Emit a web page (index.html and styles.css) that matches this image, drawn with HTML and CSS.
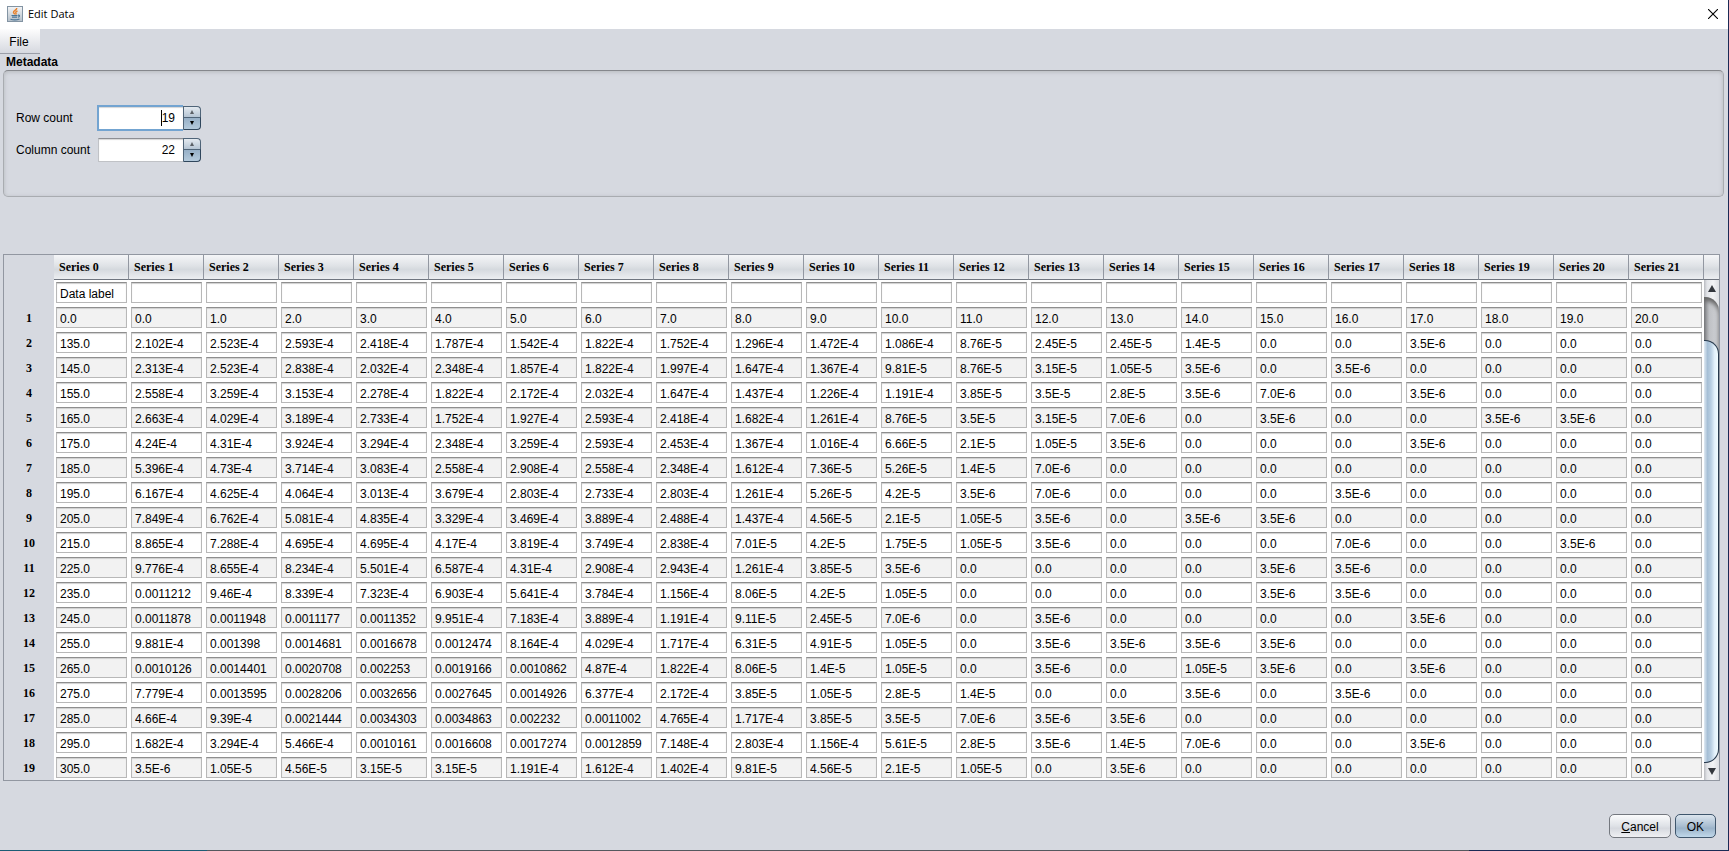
FILE: index.html
```html
<!DOCTYPE html>
<html lang="en">
<head>
<meta charset="utf-8">
<title>Edit Data</title>
<link rel="stylesheet" href="styles.css">
</head>
<body>
<div class="window">
  <header class="titlebar">
    <svg class="app-icon" viewBox="0 0 16 16" aria-hidden="true">
      <defs><linearGradient id="ig" x1="0" y1="0" x2="0" y2="1"><stop offset="0" stop-color="#f4f5f6"/><stop offset="1" stop-color="#b4bfc9"/></linearGradient></defs>
      <rect x=".5" y=".5" width="15" height="15" fill="url(#ig)" stroke="#8394a3"/>
      <path d="M9.8 2C10 4 6.300 4.600 6.500 6.300C6.600 7.200 7.800 7.600 7.600 8.500M10.500 5C9 5.500 8.300 6.300 9 7.200C9.300 7.800 9 8.200 8.600 8.600" fill="none" stroke="#e8822c" stroke-width="1.400"/>
      <path d="M4.500 9.500H10.500M5 11.200H10M3.500 13.200C6 14 10 14 12.500 13M11 9.300C13 8.800 13 10.800 10.800 11.200" fill="none" stroke="#4a7596" stroke-width="1.200"/>
    </svg>
    <h1 class="title">Edit Data</h1>
    <button class="close" type="button" aria-label="Close">
      <svg viewBox="0 0 10 10" aria-hidden="true"><path d="M0 0L10 10M10 0L0 10" stroke="#000" stroke-width="1.100"/></svg>
    </button>
  </header>
  <nav class="menubar"><button class="menu" type="button">File</button></nav>
  <main class="content">
    <section class="metadata">
      <h2 class="group-title">Metadata</h2>
      <div class="group">
        <label class="label" for="rows">Row count</label>
        <div class="spinner focused">
          <div class="field"><input id="rows" type="text" value="19"><span class="caret"></span></div>
          <div class="steps">
            <button class="step up" type="button" aria-label="Increase row count"></button>
            <button class="step down" type="button" aria-label="Decrease row count"></button>
          </div>
        </div>
        <label class="label" for="cols">Column count</label>
        <div class="spinner">
          <div class="field"><input id="cols" type="text" value="22"></div>
          <div class="steps">
            <button class="step up" type="button" aria-label="Increase column count"></button>
            <button class="step down" type="button" aria-label="Decrease column count"></button>
          </div>
        </div>
      </div>
    </section>
    <section class="grid-pane">
      <table class="grid">
        <thead><tr id="head"></tr></thead>
        <tbody id="body"></tbody>
      </table>
      <div class="scroll">
        <div class="scroll-head"></div>
        <button class="arrow arrow-up" type="button" aria-label="Scroll up"></button>
        <div class="track"><div class="thumb"></div></div>
        <button class="arrow arrow-down" type="button" aria-label="Scroll down"></button>
      </div>
    </section>
    <footer class="actions">
      <button class="button" type="button"><u>C</u>ancel</button>
      <button class="button default" type="button">OK</button>
    </footer>
  </main>
  <div class="desktop-edge"></div>
</div>
<script src="grid.js"></script>
</body>
</html>
```
FILE: styles.css
```css
* { box-sizing: border-box; }

body {
  margin: 0;
  background: #d6d9e0;
  color: #000;
  font: 12px/16px "Liberation Sans", Arial, sans-serif;
}

button, input { font: inherit; color: inherit; margin: 0; padding: 0; border: 0; }

.window {
  display: flex;
  flex-direction: column;
  min-height: 100vh;
  border-right: 1px solid #1b2a55;
}
.desktop-edge {
  height: 1px;
  background: linear-gradient(90deg, #1d5c75 12%, #55585e 12%, #55585e 85%, #1b2a55 85%);
}

.titlebar {
  display: flex;
  align-items: center;
  gap: 5px;
  height: 29px;
  padding: 0 10px 2px 7px;
  background: #fff;
}
.app-icon { width: 16px; height: 16px; }
.title { flex: 1; margin: 0; font: 11px/16px "Open Sans", "Noto Sans", sans-serif; }
.close { display: flex; background: none; }
.close svg { width: 10px; height: 10px; }

.menubar { display: flex; height: 25px; }
.menu {
  width: 40px;
  padding: 2px 2px 0 0;
  background: linear-gradient(#fdfdfd, #d6d9e0);
  border-bottom: 1px solid #9a9ea8;
}

.content { display: flex; flex-direction: column; flex: 1; padding: 0 4px 0 3px; }

.metadata { padding-bottom: 57px; }
.group-title { margin: 0; padding: 1px 0 0 3px; font-size: 12px; line-height: 15px; }
.group {
  display: grid;
  grid-template-columns: max-content max-content;
  align-content: center;
  align-items: center;
  gap: 6px 7px;
  min-height: 127px;
  padding: 0 12px;
  border: 1px solid #a9acb1;
  border-top-color: #85878c;
  border-radius: 5px;
  box-shadow: inset 0 1px 4px #b5b8bc;
}

.spinner { display: flex; width: 104px; height: 26px; }
.field { position: relative; flex: 1; display: flex; padding: 1px 0 1px 1px; }
.field input {
  flex: 1;
  width: 0;
  padding-right: 8px;
  text-align: right;
  background: #fff;
  border: 1px solid #c0c2c6;
  border-top-color: #8d8f94;
  border-right: 0;
  box-shadow: inset 0 1px 1px #d6d6d6;
}
.focused .field { padding: 0; }
.focused .field input { border: 2px solid #73a4d1; border-right: 0; caret-color: transparent; outline: none; }
.caret { position: absolute; top: 5px; right: 21px; width: 1px; height: 16px; background: #000; }
.steps { display: flex; flex-direction: column; width: 18px; padding: 1px 0; }
.step {
  display: flex;
  flex: 1;
  align-items: center;
  justify-content: center;
  border: 1px solid #4f6478;
}
.step::before { content: ""; border: 2px solid transparent; }
.up { border-radius: 0 4px 0 0; border-bottom: 0; background: linear-gradient(#e4eaf0, #b5c5d4); }
.up::before { border-top: 0; border-bottom: 4px solid #5b6066; }
.down { border-radius: 0 0 4px 0; border-color: #4f6478 #2f465c #2f465c #4f6478; background: linear-gradient(#97b0c7, #b4cadc); }
.down::before { border-bottom: 0; border-top: 4px solid #000; }

.grid-pane {
  display: flex;
  margin-right: 4px;
  border: 1px solid #9297a1;
}
.grid {
  flex: 1;
  table-layout: fixed;
  border-collapse: separate;
  border-spacing: 0;
}
.grid th { font: bold 12px/16px "Liberation Serif", "Times New Roman", serif; }
.corner { width: 50px; }
.series {
  height: 25px;
  padding: 0 5px;
  text-align: left;
  background: linear-gradient(#f5f6f8, #dfe2e6 45%, #d5d9de 60%, #eceef1);
  border-right: 1px solid #9297a1;
  border-bottom: 1px solid #6f757f;
}
.cell { height: 25px; padding: 2px; background: #fff; }
.cell input {
  display: block;
  width: 100%;
  height: 21px;
  padding: 3px 3px 0;
  background: #fff;
  border: 1px solid #b8b8b8;
  border-top-color: #8e8e8e;
  box-shadow: inset 0 1px 1px #cfcfcf;
}
.shaded input { background: #f2f2f2; }

.scroll {
  display: flex;
  flex-direction: column;
  width: 15px;
  background: linear-gradient(90deg, #b9bbc0, #e2e4e8 20%, #f2f3f5 60%, #dcdee2);
}
.scroll-head {
  height: 25px;
  background: linear-gradient(#f5f6f8, #dfe2e6 45%, #d5d9de 60%, #eceef1);
  border-bottom: 1px solid #6f757f;
}
.arrow { display: flex; align-items: center; justify-content: center; height: 17px; background: none; }
.arrow::before { content: ""; border: 4px solid transparent; }
.arrow-up::before { border-top: 0; border-bottom: 7px solid #33373d; }
.arrow-down::before { border-bottom: 0; border-top: 7px solid #33373d; }
.track {
  flex: 1;
  display: flex;
  padding-top: 43px;
  border-radius: 0 14px 14px 0;
  background: linear-gradient(90deg, #85878c, #bfc1c5 35%, #d2d4d8);
  box-shadow: inset 0 4px 4px #666;
}
.thumb {
  flex: 1;
  border: 1px solid #26394d;
  border-left: 0;
  border-radius: 0 14px 14px 0;
  background: linear-gradient(90deg, #dfe9f2, #a6bfd6 25%, #b9cfe2 50%, #e2f0fa 75%, #f2fdff);
}

.actions { display: flex; justify-content: flex-end; gap: 4px; padding: 33px 8px 12px; }
.button {
  height: 24px;
  padding: 1px 11px 0;
  border: 1px solid #74787f;
  border-radius: 5px;
  background: linear-gradient(#fafbfc, #dfe2e7 50%, #d6d9df 60%, #eff0f3);
}
.default { border-color: #3f566c; background: linear-gradient(#dce5ee, #a9bed1 50%, #9bb3c9 60%, #c0d8ea); }
```
FILE: grid.js
```js
const rows = [
  "0.0 0.0 1.0 2.0 3.0 4.0 5.0 6.0 7.0 8.0 9.0 10.0 11.0 12.0 13.0 14.0 15.0 16.0 17.0 18.0 19.0 20.0",
  "135.0 2.102E-4 2.523E-4 2.593E-4 2.418E-4 1.787E-4 1.542E-4 1.822E-4 1.752E-4 1.296E-4 1.472E-4 1.086E-4 8.76E-5 2.45E-5 2.45E-5 1.4E-5 0.0 0.0 3.5E-6 0.0 0.0 0.0",
  "145.0 2.313E-4 2.523E-4 2.838E-4 2.032E-4 2.348E-4 1.857E-4 1.822E-4 1.997E-4 1.647E-4 1.367E-4 9.81E-5 8.76E-5 3.15E-5 1.05E-5 3.5E-6 0.0 3.5E-6 0.0 0.0 0.0 0.0",
  "155.0 2.558E-4 3.259E-4 3.153E-4 2.278E-4 1.822E-4 2.172E-4 2.032E-4 1.647E-4 1.437E-4 1.226E-4 1.191E-4 3.85E-5 3.5E-5 2.8E-5 3.5E-6 7.0E-6 0.0 3.5E-6 0.0 0.0 0.0",
  "165.0 2.663E-4 4.029E-4 3.189E-4 2.733E-4 1.752E-4 1.927E-4 2.593E-4 2.418E-4 1.682E-4 1.261E-4 8.76E-5 3.5E-5 3.15E-5 7.0E-6 0.0 3.5E-6 0.0 0.0 3.5E-6 3.5E-6 0.0",
  "175.0 4.24E-4 4.31E-4 3.924E-4 3.294E-4 2.348E-4 3.259E-4 2.593E-4 2.453E-4 1.367E-4 1.016E-4 6.66E-5 2.1E-5 1.05E-5 3.5E-6 0.0 0.0 0.0 3.5E-6 0.0 0.0 0.0",
  "185.0 5.396E-4 4.73E-4 3.714E-4 3.083E-4 2.558E-4 2.908E-4 2.558E-4 2.348E-4 1.612E-4 7.36E-5 5.26E-5 1.4E-5 7.0E-6 0.0 0.0 0.0 0.0 0.0 0.0 0.0 0.0",
  "195.0 6.167E-4 4.625E-4 4.064E-4 3.013E-4 3.679E-4 2.803E-4 2.733E-4 2.803E-4 1.261E-4 5.26E-5 4.2E-5 3.5E-6 7.0E-6 0.0 0.0 0.0 3.5E-6 0.0 0.0 0.0 0.0",
  "205.0 7.849E-4 6.762E-4 5.081E-4 4.835E-4 3.329E-4 3.469E-4 3.889E-4 2.488E-4 1.437E-4 4.56E-5 2.1E-5 1.05E-5 3.5E-6 0.0 3.5E-6 3.5E-6 0.0 0.0 0.0 0.0 0.0",
  "215.0 8.865E-4 7.288E-4 4.695E-4 4.695E-4 4.17E-4 3.819E-4 3.749E-4 2.838E-4 7.01E-5 4.2E-5 1.75E-5 1.05E-5 3.5E-6 0.0 0.0 0.0 7.0E-6 0.0 0.0 3.5E-6 0.0",
  "225.0 9.776E-4 8.655E-4 8.234E-4 5.501E-4 6.587E-4 4.31E-4 2.908E-4 2.943E-4 1.261E-4 3.85E-5 3.5E-6 0.0 0.0 0.0 0.0 3.5E-6 3.5E-6 0.0 0.0 0.0 0.0",
  "235.0 0.0011212 9.46E-4 8.339E-4 7.323E-4 6.903E-4 5.641E-4 3.784E-4 1.156E-4 8.06E-5 4.2E-5 1.05E-5 0.0 0.0 0.0 0.0 3.5E-6 3.5E-6 0.0 0.0 0.0 0.0",
  "245.0 0.0011878 0.0011948 0.0011177 0.0011352 9.951E-4 7.183E-4 3.889E-4 1.191E-4 9.11E-5 2.45E-5 7.0E-6 0.0 3.5E-6 0.0 0.0 0.0 0.0 3.5E-6 0.0 0.0 0.0",
  "255.0 9.881E-4 0.001398 0.0014681 0.0016678 0.0012474 8.164E-4 4.029E-4 1.717E-4 6.31E-5 4.91E-5 1.05E-5 0.0 3.5E-6 3.5E-6 3.5E-6 3.5E-6 0.0 0.0 0.0 0.0 0.0",
  "265.0 0.0010126 0.0014401 0.0020708 0.002253 0.0019166 0.0010862 4.87E-4 1.822E-4 8.06E-5 1.4E-5 1.05E-5 0.0 3.5E-6 0.0 1.05E-5 3.5E-6 0.0 3.5E-6 0.0 0.0 0.0",
  "275.0 7.779E-4 0.0013595 0.0028206 0.0032656 0.0027645 0.0014926 6.377E-4 2.172E-4 3.85E-5 1.05E-5 2.8E-5 1.4E-5 0.0 0.0 3.5E-6 0.0 3.5E-6 0.0 0.0 0.0 0.0",
  "285.0 4.66E-4 9.39E-4 0.0021444 0.0034303 0.0034863 0.002232 0.0011002 4.765E-4 1.717E-4 3.85E-5 3.5E-5 7.0E-6 3.5E-6 3.5E-6 0.0 0.0 0.0 0.0 0.0 0.0 0.0",
  "295.0 1.682E-4 3.294E-4 5.466E-4 0.0010161 0.0016608 0.0017274 0.0012859 7.148E-4 2.803E-4 1.156E-4 5.61E-5 2.8E-5 3.5E-6 1.4E-5 7.0E-6 0.0 0.0 3.5E-6 0.0 0.0 0.0",
  "305.0 3.5E-6 1.05E-5 4.56E-5 3.15E-5 3.15E-5 1.191E-4 1.612E-4 1.402E-4 9.81E-5 4.56E-5 2.1E-5 1.05E-5 0.0 3.5E-6 0.0 0.0 0.0 0.0 0.0 0.0 0.0"
].map(line => line.split(" "));

const columns = 22;
const head = document.getElementById("head");
const body = document.getElementById("body");

function header(text, className, scope) {
  const th = document.createElement("th");
  th.className = className;
  th.textContent = text;
  if (scope) th.scope = scope;
  return th;
}

function addRow(name, values, shaded) {
  const tr = document.createElement("tr");
  if (shaded) tr.className = "shaded";
  tr.append(header(name, "row-number", "row"));
  for (let c = 0; c < columns; c++) {
    const td = document.createElement("td");
    td.className = "cell";
    const input = document.createElement("input");
    input.type = "text";
    input.value = values[c] || "";
    input.setAttribute("aria-label", `Series ${c}, row ${name || "label"}`);
    td.append(input);
    tr.append(td);
  }
  body.append(tr);
}

head.append(header("", "corner"));
for (let c = 0; c < columns; c++) head.append(header(`Series ${c}`, "series", "col"));
addRow("", ["Data label"], false);
rows.forEach((values, i) => addRow(String(i + 1), values, i % 2 === 0));

const rowCount = document.getElementById("rows");
rowCount.focus();
rowCount.setSelectionRange(0, 0);
```
